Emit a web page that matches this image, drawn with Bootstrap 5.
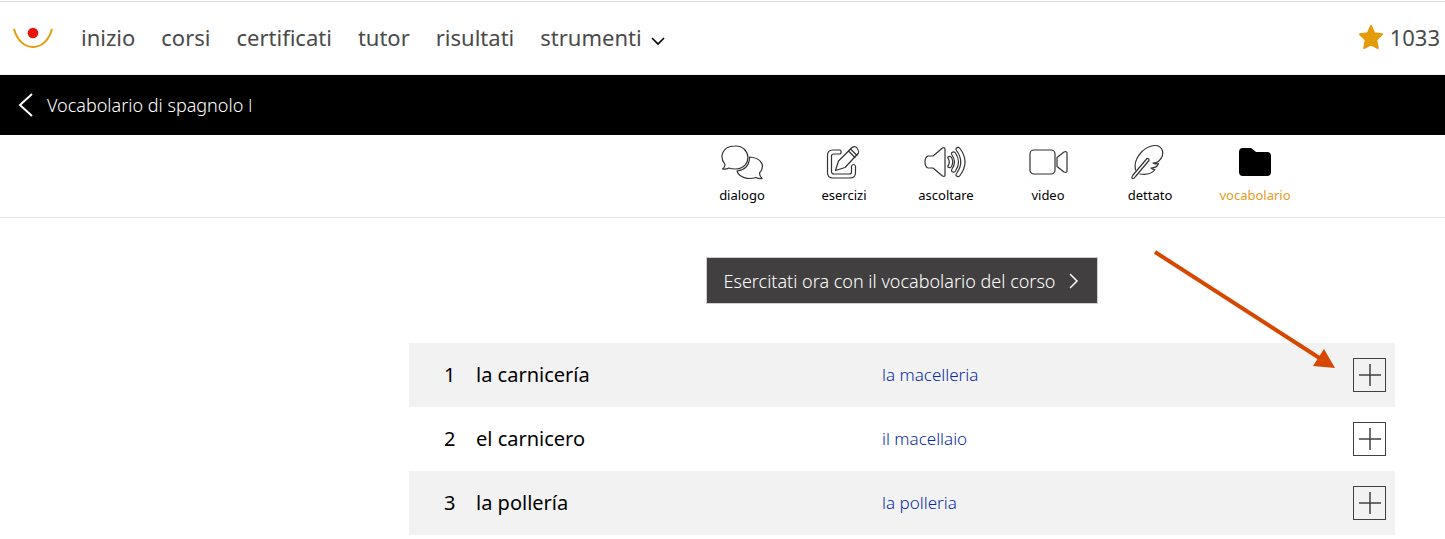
<!DOCTYPE html>
<html lang="it">
<head>
<meta charset="utf-8">
<meta name="viewport" content="width=device-width, initial-scale=1">
<title>Vocabolario di spagnolo I</title>
<link href="https://cdn.jsdelivr.net/npm/bootstrap@5.3.0/dist/css/bootstrap.min.css" rel="stylesheet">
<style>
body { font-family: "Noto Sans", "Open Sans", sans-serif; color: #000; background: #fff; }
.site-head { height: 74px; margin-top: 1px; border-top: 1px solid #ddd; border-bottom: 1px solid #eee; padding: 0 5px 2px 13px; }
.brand-mark { width: 40px; margin-right: 28px; }
.site-links { gap: 26px; }
.site-links a, .points { font-size: 22px; line-height: 30px; color: #4a4a4a; }
.points { gap: 6px; }
.course-bar { height: 60px; background: #000; padding-left: 18px; }
.course-bar a { gap: 13px; font-size: 18px; line-height: 24px; color: #fff; font-weight: 300; }
.numeral { font-family: "Open Sans", sans-serif; }
.lesson-tabs { height: 83px; border-bottom: 1px solid #e5e5e5; padding-right: 136px; }
.tab-link { width: 102px; padding-top: 5px; font-size: 13px; line-height: 18px; color: #000; gap: 2px; }
.tab-link svg { width: 44px; height: 44px; fill: none; stroke: #333; stroke-width: 1.2; stroke-linejoin: round; stroke-linecap: round; }
.tab-link.current { width: 108px; color: #e89a24; }
.vocab-area { padding: 39px 50px 0 409px; }
.practice-btn { height: 47px; padding: 0 17px; gap: 13px; background: #413f40; border: 1px solid #d0d0d0; border-radius: 0; color: #fff; font-size: 18px; line-height: 24px; font-weight: 300; }
.practice-btn:hover { background: #555; color: #fff; }
.word-list { margin-top: 39px; table-layout: fixed; width: 100%; }
.word-list tr { height: 64px; }
.word-list tr:nth-child(odd) { background: #f2f2f2; }
.word-list td { padding: 0; vertical-align: middle; font-size: 20px; line-height: 28px; }
.col-num { width: 67px; }
.col-word { width: 406px; }
.col-add { width: 60px; }
.word-list td.num { padding-left: 35px; }
.word-list td.meaning { font-size: 17px; font-weight: 300; color: #0a2ba8; }
.word-list td.add { padding-right: 9px; }
.add-btn { width: 33px; height: 34px; border: 1px solid #413f40; background: transparent; }
.hint-arrow { top: 30px; right: 108px; pointer-events: none; }
</style>
</head>
<body>
<header class="site-head d-flex align-items-center">
  <a href="#" class="brand-mark d-flex" aria-label="Home">
    <svg width="40" height="24" viewBox="0 0 40 24"><path d="M1 4C4 15 11 22 20 22S36 15 39 4" fill="none" stroke="#e39b0c" stroke-width="2"/><circle cx="20" cy="8" r="5.300" fill="#e8140c"/></svg>
  </a>
  <nav class="site-links d-flex">
    <a class="text-decoration-none" href="#">inizio</a>
    <a class="text-decoration-none" href="#">corsi</a>
    <a class="text-decoration-none" href="#">certificati</a>
    <a class="text-decoration-none" href="#">tutor</a>
    <a class="text-decoration-none" href="#">risultati</a>
    <a class="text-decoration-none d-flex align-items-center gap-2" href="#">strumenti
      <svg class="mt-2" width="16" height="10" viewBox="0 0 16 10"><path d="M2 2l6 6 6-6" fill="none" stroke="#000" stroke-width="1.600"/></svg></a>
  </nav>
  <div class="points d-flex align-items-center ms-auto">
    <svg width="26" height="26" viewBox="0 0 26 26"><path d="M13 2l3.300 7.300 7.700 1-5.700 5.500 1.500 8.200-6.800-3.700L6.200 24l1.500-8.200L2 10.300l7.700-1z" fill="#e39b0c" stroke="#e39b0c" stroke-width="2" stroke-linejoin="round"/></svg>
    <span>1033</span>
  </div>
</header>

<div class="course-bar d-flex align-items-center">
  <a href="#" class="d-flex align-items-center text-decoration-none">
    <svg width="16" height="26" viewBox="0 0 16 26"><path d="M14 2L2 13l12 11" fill="none" stroke="#fff" stroke-width="2"/></svg>
    <span>Vocabolario di spagnolo <span class="numeral">I</span></span>
  </a>
</div>

<nav class="lesson-tabs d-flex justify-content-end">
  <a href="#" class="tab-link d-flex flex-column align-items-center text-decoration-none">
    <svg viewBox="0 0 44 44"><path d="M5 24.500C-1 17 2 6 15 6c16-.500 18 22 1 23-3 0-5 0-7-1-2 1-4 1.500-6.500 1C4 28 5 26.500 5 24.500z"/><path d="M29.500 17C43 18 45 27 39.500 33c0 2 1 4 2.500 5.500-2 .500-4 0-6-1-8 2.500-17 0-19-6.500 8-1 12.500-6 12.500-14z"/></svg>
    <span>dialogo</span></a>
  <a href="#" class="tab-link d-flex flex-column align-items-center text-decoration-none">
    <svg viewBox="0 0 44 44"><path d="M18 10h-7q-5.500 0-5.500 5.500v17q0 5.500 5.500 5.500h17q5.500 0 5.500-5.500V26q-2-3-4 0v6q0 2-2 2H12q-2.500 0-2.500-2.500V16q0-2 2-2h6.500q2.500-2 0-4z"/><path d="M13.500 30.500l3-9.500L30 7.500q3-2 5 .500t1.500 5L23 27.500z"/><path d="M26.500 11l6.500 6.500M28.500 9l6.500 6.500"/></svg>
    <span>esercizi</span></a>
  <a href="#" class="tab-link d-flex flex-column align-items-center text-decoration-none">
    <svg viewBox="0 0 44 44"><path d="M4 16h5L18.500 8q2.500-1 2.500 1v26q0 2-2.500 1L9 28H4q-3-1-3-6t3-6z"/><path d="M24 17q2-1.500 3.500 .500 2.500 4.500 0 9-1.500 2-3.500 .500-.500-1 .500-2 1.500-3 0-6-1-1-.500-2zM28 12.500q2-1.500 3.500 .500 6 9 0 18-1.500 2-3.500 .500-1-1 0-2.500 5-7 0-14-1-1.500 0-2.500zM32.500 8q2-1.500 3.500 .500 10 13.500 0 27-1.500 2-3.500 .500-1-1 0-2.500 8.500-11.500 0-23-1-1.500 0-2.500z"/></svg>
    <span>ascoltare</span></a>
  <a href="#" class="tab-link d-flex flex-column align-items-center text-decoration-none">
    <svg viewBox="0 0 44 44"><rect x="4" y="10" width="25" height="24" rx="4"/><path d="M31 17.500L38 12q3-1 3 1v18q0 2-3 1l-7-5.500z"/></svg>
    <span>video</span></a>
  <a href="#" class="tab-link d-flex flex-column align-items-center text-decoration-none">
    <svg viewBox="0 0 44 44"><path d="M7.500 30C5 20 14 7 26 5.500c9-.500 12 9 4.500 16-2 1.500-3.500 1.500-5.500 1.500 2 1.500 4 1 5.500 .500-1 3-3.500 4.500-7.500 4.500 1 1 2.500 1.500 4 1.500-3 4-9 5.500-15 4.500"/><path d="M19 18.500L5 35q-2 3-.500 3.500t3-2L21 20.500q0-2.500-2-2z"/></svg>
    <span>dettato</span></a>
  <a href="#" class="tab-link current d-flex flex-column align-items-center text-decoration-none" aria-current="page">
    <svg viewBox="0 0 44 44"><path d="M10 8h8l5 4h11q4 0 4 4v16q0 4-4 4H10q-4 0-4-4V12q0-4 4-4z" style="fill:#000;stroke:none"/></svg>
    <span>vocabolario</span></a>
</nav>

<main class="vocab-area position-relative">
  <div class="d-flex justify-content-center">
    <button type="button" class="btn practice-btn d-flex align-items-center">
      <span>Esercitati ora con il vocabolario del corso</span>
      <svg width="12" height="18" viewBox="0 0 12 18"><path d="M2 2l7 7-7 7" fill="none" stroke="#fff" stroke-width="1.500"/></svg>
    </button>
  </div>
  <table class="word-list">
    <colgroup><col class="col-num"><col class="col-word"><col><col class="col-add"></colgroup>
    <tbody>
      <tr><td class="num">1</td><td lang="es">la carnicería</td><td class="meaning">la macelleria</td><td class="add"><button type="button" class="add-btn d-flex align-items-center justify-content-center p-0 ms-auto" aria-label="Aggiungi la carnicería"><svg width="22" height="22" viewBox="0 0 22 22"><path d="M0 11h22M11 0v22" stroke="#413f40" stroke-width="1.500"/></svg></button></td></tr>
      <tr><td class="num">2</td><td lang="es">el carnicero</td><td class="meaning">il macellaio</td><td class="add"><button type="button" class="add-btn d-flex align-items-center justify-content-center p-0 ms-auto" aria-label="Aggiungi el carnicero"><svg width="22" height="22" viewBox="0 0 22 22"><path d="M0 11h22M11 0v22" stroke="#413f40" stroke-width="1.500"/></svg></button></td></tr>
      <tr><td class="num">3</td><td lang="es">la pollería</td><td class="meaning">la polleria</td><td class="add"><button type="button" class="add-btn d-flex align-items-center justify-content-center p-0 ms-auto" aria-label="Aggiungi la pollería"><svg width="22" height="22" viewBox="0 0 22 22"><path d="M0 11h22M11 0v22" stroke="#413f40" stroke-width="1.500"/></svg></button></td></tr>
    </tbody>
  </table>
  <svg class="hint-arrow position-absolute" width="185" height="122" viewBox="0 0 185 122" aria-hidden="true"><path d="M3 4l166 107" stroke="#d64700" stroke-width="4"/><path d="M183 120l-22-2 11-17z" fill="#d64700"/></svg>
</main>
<script src="https://cdn.jsdelivr.net/npm/bootstrap@5.3.0/dist/js/bootstrap.bundle.min.js"></script>
</body>
</html>
